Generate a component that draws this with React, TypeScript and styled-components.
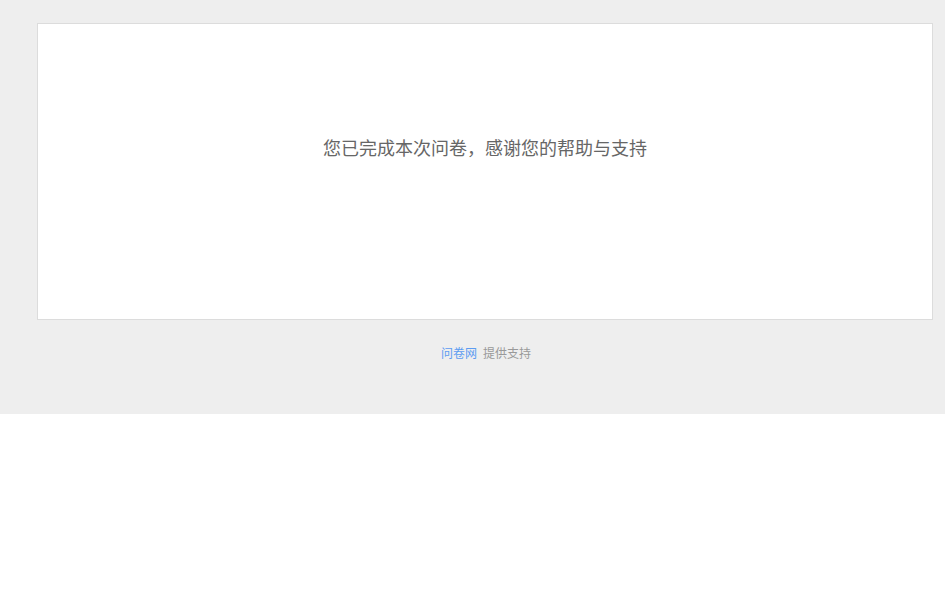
import React from "react";
import styled, { createGlobalStyle } from "styled-components";

const Global = createGlobalStyle`
  html, body { margin: 0; padding: 0; background: #fff; }
  body { font-family: "Noto Sans CJK SC", "Noto Sans", sans-serif; }
`;

const Page = styled.div`
  background: #eeeeee;
  padding: 23px 12px 53px 37px;
`;

const Card = styled.div`
  box-sizing: border-box;
  height: 297px;
  background: #fff;
  border: 1px solid #dcdcdc;
  padding-top: 111px;
  text-align: center;
`;

const Message = styled.div`
  font-size: 18px;
  line-height: 24px;
  color: #666;
`;

const Footer = styled.div`
  margin-top: 25px;
  padding-left: 2px;
  text-align: center;
  font-size: 12px;
  line-height: 16px;
  color: #999;
  display: flex;
  justify-content: center;
  gap: 6px;
`;

const Brand = styled.a`
  color: #5c9cf2;
  text-decoration: none;
`;

export default function App() {
  return (
    <>
      <Global />
      <Page>
        <Card>
          <Message>您已完成本次问卷，感谢您的帮助与支持</Message>
        </Card>
        <Footer>
          <Brand href="#">问卷网</Brand>
          <span>提供支持</span>
        </Footer>
      </Page>
    </>
  );
}
